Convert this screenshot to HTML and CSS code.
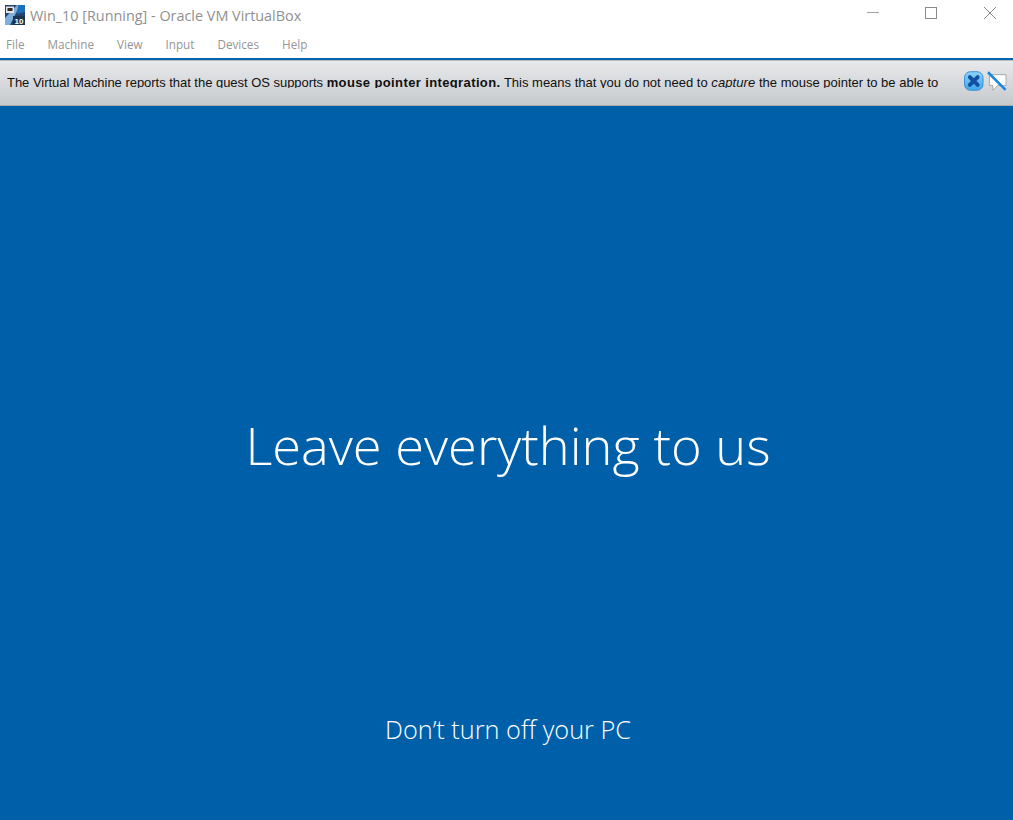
FILE: index.html
```html
<!DOCTYPE html>
<html lang="en">
<head>
    <meta charset="UTF-8">
    <title>Win_10 [Running] - Oracle VM VirtualBox</title>
    <link rel="stylesheet" href="styles.css">
</head>
<body>
    <!-- Title bar -->
    <header class="titlebar">
        <svg class="app-icon" width="20" height="20" viewBox="0 0 20 20">
            <rect width="20" height="20" fill="#24466e"/>
            <path d="M0 13L12 0H15L5 20H0Z" fill="#7fb0dc"/>
            <path d="M13 0H20V7L12 9Z" fill="#1d6fb8"/>
            <rect x="1" y="1.5" width="8" height="6.5" fill="#e6e6e6"/>
            <rect x="2.5" y="3" width="5" height="3" fill="#2c2c2c"/>
            <rect x="8" y="11" width="12" height="9" fill="#1c3553"/>
            <text class="app-icon-num" x="14" y="19">10</text>
        </svg>
        <span class="title">Win_10 [Running] - Oracle VM VirtualBox</span>
        <div class="win-buttons">
            <svg width="46" height="26" viewBox="0 0 46 26"><path d="M16 12.5H28" stroke="#a0a0a0" fill="none"/></svg>
            <svg width="46" height="26" viewBox="0 0 46 26"><rect x="16.5" y="7.5" width="11" height="11" stroke="#8a8a8a" fill="none"/></svg>
            <svg width="46" height="26" viewBox="0 0 46 26"><path d="M17 7L29 19M29 7L17 19" stroke="#8a8a8a" fill="none"/></svg>
        </div>
    </header>

    <!-- Menu -->
    <nav class="menubar">
        <a href="#">File</a>
        <a href="#">Machine</a>
        <a href="#">View</a>
        <a href="#">Input</a>
        <a href="#">Devices</a>
        <a href="#">Help</a>
    </nav>

    <!-- Notice -->
    <div class="notice">
        <div class="notice-clip">
            <p class="notice-text">The Virtual Machine reports that the guest OS supports <b>mouse pointer integration.</b><span class="notice-tail"> This means that you do not need to <i>capture</i> the mouse pointer to be able to</span></p>
        </div>
        <svg class="notice-icon" width="20" height="20" viewBox="0 0 20 20">
            <defs>
                <linearGradient id="closeFill" x1="0" y1="0" x2="0" y2="1">
                    <stop offset="0" stop-color="#8fd2f7"/>
                    <stop offset="1" stop-color="#3fa6ea"/>
                </linearGradient>
            </defs>
            <rect x="0.5" y="0.5" width="19" height="19" rx="6" fill="url(#closeFill)" stroke="#3c8fd2"/>
            <path d="M6 6L14 14M14 6L6 14" stroke="#114f9f" stroke-width="4" stroke-linecap="round"/>
        </svg>
        <svg class="notice-icon notice-icon-last" width="21" height="21" viewBox="0 0 21 21">
            <path d="M2.5 3.5H19.5V14.5H11L6 19.5V14.5H2.5Z" fill="#fff" stroke="#a8a8a8"/>
            <path d="M1 1L19 19" stroke="#1b86dc" stroke-width="2.6"/>
        </svg>
    </div>

    <!-- Guest screen -->
    <main class="screen">
        <h1>Leave everything to us</h1>
        <p>Don’t turn off your PC</p>
    </main>
</body>
</html>
```
FILE: styles.css
```css
/* General */
html, body {
    height: 100%;
}
body {
    margin: 0;
    display: flex;
    flex-direction: column;
    overflow: hidden;
    background-color: #005fa9;
    font-family: "Open Sans", "Noto Sans", sans-serif;
}

/* Title bar */
.titlebar {
    height: 30px;
    flex: none;
    display: flex;
    align-items: center;
    padding-left: 5px;
    background-color: #fff;
    box-sizing: border-box;
}
.app-icon {
    flex: none;
}
.app-icon-num {
    font-family: "Liberation Sans", sans-serif;
    font-size: 8px;
    font-weight: bold;
    fill: #fff;
    text-anchor: middle;
}
.title {
    margin-left: 5px;
    font-size: 14.4px;
    color: #909090;
}
.win-buttons {
    margin-left: auto;
    display: flex;
    gap: 12px;
    align-self: flex-start;
}

/* Menu */
.menubar {
    height: 28px;
    flex: none;
    display: flex;
    align-items: center;
    gap: 23px;
    padding-left: 6px;
    background-color: #fff;
    box-sizing: border-box;
}
.menubar a {
    font-size: 11.7px;
    color: #959595;
    text-decoration: none;
}

/* Notice */
.notice {
    height: 48px;
    flex: none;
    display: flex;
    align-items: center;
    padding: 0 6px 4px 7px;
    box-sizing: border-box;
    border-top: 2px solid #0a64ad;
    box-shadow: inset 0 1px 0 #b7bcc2, inset 0 -1px 0 #a9adb2;
    background: linear-gradient(#e8eaec, #c6c9cc);
}
.notice-clip {
    width: 957px;
    height: 14px;
    overflow: hidden;
    flex: none;
}
.notice-text {
    margin: 0;
    font-family: "Liberation Sans", sans-serif;
    font-size: 13px;
    letter-spacing: -0.03px;
    line-height: 18px;
    white-space: nowrap;
    color: #101010;
}
.notice-text b {
    letter-spacing: 0.38px;
}
.notice-tail {
    letter-spacing: 0;
}
.notice-text i {
    letter-spacing: 0.1px;
}
.notice-icon-last {
    margin-left: 3px;
}

/* Guest screen */
.screen {
    flex: 1;
    display: flex;
    flex-direction: column;
    align-items: center;
    padding-left: 3px;
    color: #fff;
    font-weight: 300;
}
.screen h1 {
    margin: 302px 0 0;
    font-size: 52.4px;
    line-height: 74px;
    font-weight: 300;
}
.screen p {
    margin: 230px 0 0;
    font-size: 25.3px;
    line-height: 34px;
}
```
